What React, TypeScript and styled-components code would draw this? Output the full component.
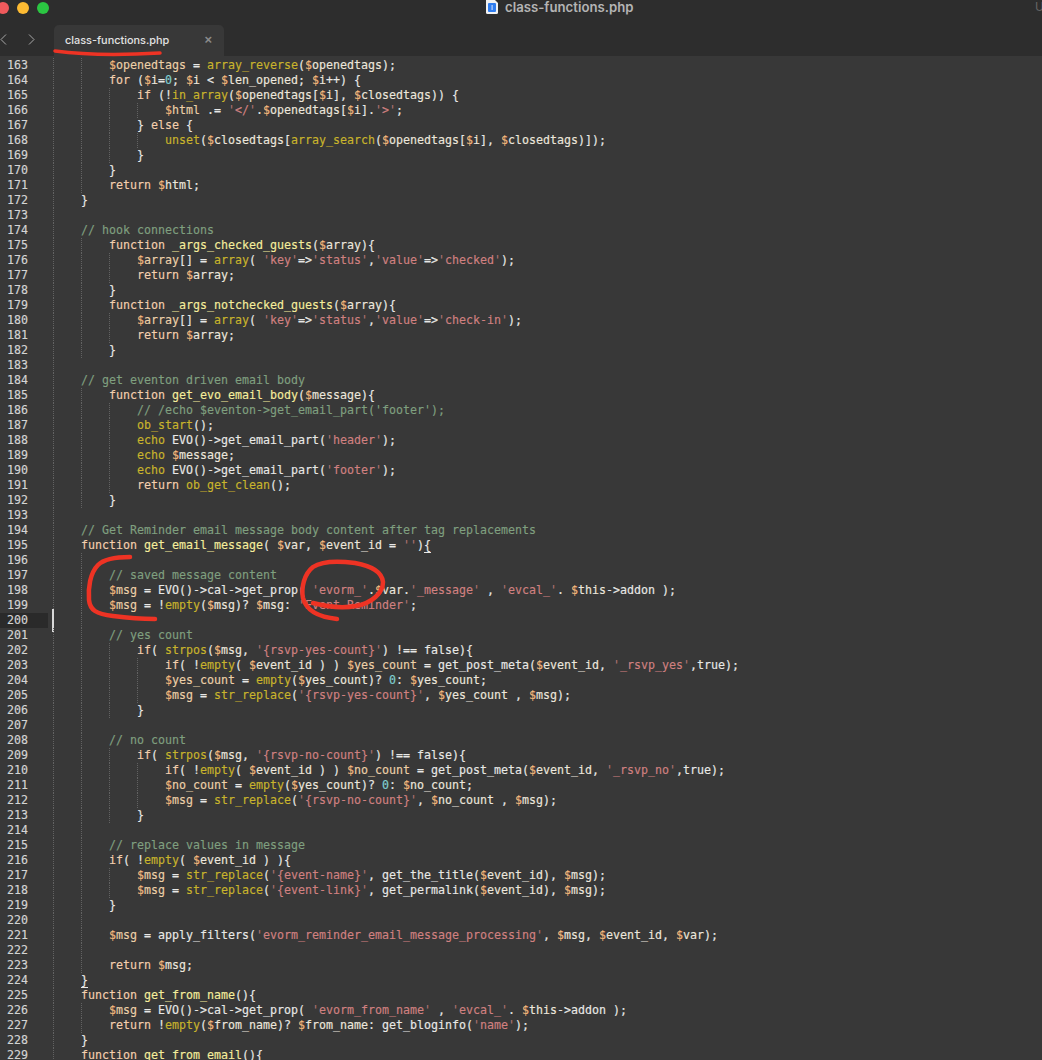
import React from 'react';
import styled, { createGlobalStyle } from 'styled-components';

type Kind = 'plain' | 'comment' | 'string' | 'quote' | 'sigil' | 'variable' | 'target' | 'keyword' | 'builtin' | 'definition' | 'number';

const COLORS: Record<Kind, string> = {
  plain: '#e8e8e6',
  comment: '#7f9f7f',
  string: '#d08080',
  quote: '#ac7272',
  sigil: '#f2b77c',
  variable: '#ece6dc',
  target: '#ecd0a8',
  keyword: '#f3cfae',
  builtin: '#c8b42c',
  definition: '#f5ed9c',
  number: '#7fcfd0',
};

const FIRST_LINE = 163;
const ACTIVE_LINE = 200;
const MATCHED_BRACES = [195, 224];

const SOURCE = `        $openedtags = array_reverse($openedtags);
        for ($i=0; $i < $len_opened; $i++) {
            if (!in_array($openedtags[$i], $closedtags)) {
                $html .= '</'.$openedtags[$i].'>';
            } else {
                unset($closedtags[array_search($openedtags[$i], $closedtags)]);
            }
        }
        return $html;
    }

    // hook connections
        function _args_checked_guests($array){
            $array[] = array( 'key'=>'status','value'=>'checked');
            return $array;
        }
        function _args_notchecked_guests($array){
            $array[] = array( 'key'=>'status','value'=>'check-in');
            return $array;
        }

    // get eventon driven email body
        function get_evo_email_body($message){
            // /echo $eventon->get_email_part('footer');
            ob_start();
            echo EVO()->get_email_part('header');
            echo $message;
            echo EVO()->get_email_part('footer');
            return ob_get_clean();
        }

    // Get Reminder email message body content after tag replacements
    function get_email_message( $var, $event_id = ''){

        // saved message content
        $msg = EVO()->cal->get_prop( 'evorm_'.$var.'_message' , 'evcal_'. $this->addon );
        $msg = !empty($msg)? $msg: 'Event Reminder';

        // yes count
            if( strpos($msg, '{rsvp-yes-count}') !== false){
                if( !empty( $event_id ) ) $yes_count = get_post_meta($event_id, '_rsvp_yes',true);
                $yes_count = empty($yes_count)? 0: $yes_count;
                $msg = str_replace('{rsvp-yes-count}', $yes_count , $msg);
            }

        // no count
            if( strpos($msg, '{rsvp-no-count}') !== false){
                if( !empty( $event_id ) ) $no_count = get_post_meta($event_id, '_rsvp_no',true);
                $no_count = empty($yes_count)? 0: $no_count;
                $msg = str_replace('{rsvp-no-count}', $no_count , $msg);
            }

        // replace values in message
        if( !empty( $event_id ) ){
            $msg = str_replace('{event-name}', get_the_title($event_id), $msg);
            $msg = str_replace('{event-link}', get_permalink($event_id), $msg);
        }

        $msg = apply_filters('evorm_reminder_email_message_processing', $msg, $event_id, $var);

        return $msg;
    }
    function get_from_name(){
        $msg = EVO()->cal->get_prop( 'evorm_from_name' , 'evcal_'. $this->addon );
        return !empty($from_name)? $from_name: get_bloginfo('name');
    }
    function get_from_email(){`;

const KEYWORDS = ['function', 'for', 'if', 'else', 'return'];
const BUILTINS = ['array_reverse', 'in_array', 'unset', 'array_search', 'array', 'ob_start', 'ob_get_clean', 'echo', 'empty', 'strpos', 'str_replace'];

const GlobalStyle = createGlobalStyle`
  html, body {
    margin: 0;
    background: #383838;
  }
`;

const Window = styled.div`
  position: relative;
  width: 1042px;
  height: 1060px;
  overflow: hidden;
  background: #383838;
`;

const TitleRow = styled.div`
  display: flex;
  align-items: flex-start;
  height: 25px;
  background: #2d2d2d;
`;

const Lights = styled.div`
  display: flex;
  gap: 8px;
  margin: 2px 0 0 -3px;
`;

const Light = styled.span<{ $color: string }>`
  width: 12px;
  height: 12px;
  border-radius: 50%;
  background: ${p => p.$color};
`;

const Title = styled.div`
  display: flex;
  align-items: flex-start;
  gap: 7px;
  margin-left: 437px;
  font: 600 13.2px/14px Inter, sans-serif;
  color: #b4b4b4;
`;

const CutOffHint = styled.div`
  margin-left: auto;
  margin-right: -1px;
  width: 8px;
  overflow: hidden;
  font: 12px/14px Inter, sans-serif;
  color: #666;
`;

const TabRow = styled.div`
  display: flex;
  align-items: stretch;
  height: 31px;
  background: #2d2d2d;
`;

const Nav = styled.div`
  display: flex;
  align-items: center;
  gap: 21px;
  width: 54px;
  padding: 0 0 3px 0;
  box-sizing: border-box;
`;

const Tab = styled.div`
  display: flex;
  align-items: center;
  justify-content: space-between;
  width: 170px;
  padding: 0 12px 0 11px;
  box-sizing: border-box;
  border-radius: 5px 5px 0 0;
  background: #383838;
  font: 500 10.9px/15px Inter, sans-serif;
  color: #e2e2e2;
`;

const Close = styled.span`
  margin-top: -2px;
  font: 700 13px/15px "Liberation Sans", sans-serif;
  color: #8a8a8a;
`;

const Editor = styled.div`
  padding-top: 2px;
  font: 11.63px/15px "DejaVu Sans Mono", monospace;
  white-space: pre;
  -webkit-text-stroke: 0.15px;
`;

const Row = styled.div`
  position: relative;
  display: flex;
  height: 15px;
`;

const LineNumber = styled.div<{ $active: boolean }>`
  flex: none;
  width: 48px;
  margin-right: 5px;
  padding-left: 7px;
  box-sizing: border-box;
  color: #d4d4d4;
  background: ${p => (p.$active ? '#2a2a2a' : 'transparent')};
`;

const Guide = styled.span`
  flex: none;
  width: 4ch;
  box-sizing: border-box;
  border-left: 1px dotted #626262;
`;

const Caret = styled.span`
  position: absolute;
  left: 52px;
  top: -4px;
  width: 2px;
  height: 23px;
  background: #d8d8d8;
`;

const Token = styled.span<{ $kind: Kind; $matched?: boolean }>`
  color: ${p => COLORS[p.$kind]};
  ${p => p.$matched && 'border-bottom: 1px solid #e8e8e6;'}
`;

const Marker = styled.svg`
  position: absolute;
  inset: 0;
  pointer-events: none;
`;

const Stroke = styled.path`
  fill: none;
  stroke: #ee3324;
  stroke-linecap: round;
  stroke-linejoin: round;
`;

const tokenize = (text: string) => {
  const out: { kind: Kind; text: string }[] = [];
  const pattern = /(\/\/.*$)|('[^']*')|(\$\w+)|(\b\d+\b)|([A-Za-z_]\w*)|([\s\S])/g;
  let prevWord = '';
  for (const m of text.matchAll(pattern)) {
    if (m[1]) out.push({ kind: 'comment', text: m[1] });
    else if (m[2]) {
      out.push({ kind: 'quote', text: "'" });
      if (m[2].length > 2) out.push({ kind: 'string', text: m[2].slice(1, -1) });
      out.push({ kind: 'quote', text: "'" });
    } else if (m[3]) {
      // assignment targets are tinted, other variables only get a coloured $
      const rest = text.slice(m.index + m[3].length);
      const isTarget = /^(\[\])? \.?= /.test(rest) && m[3] !== '$event_id';
      out.push({ kind: 'sigil', text: '$' });
      out.push({ kind: isTarget ? 'target' : 'variable', text: m[3].slice(1) });
    } else if (m[4]) out.push({ kind: 'number', text: m[4] });
    else if (m[5]) {
      let kind: Kind = 'plain';
      if (prevWord === 'function') kind = 'definition';
      else if (KEYWORDS.includes(m[5])) kind = 'keyword';
      else if (BUILTINS.includes(m[5])) kind = 'builtin';
      out.push({ kind, text: m[5] });
      prevWord = m[5];
    } else out.push({ kind: 'plain', text: m[6] });
  }
  return out;
};

const indentOf = (line: string) => line.length - line.trimStart().length;

const lines = SOURCE.split('\n');

// blank lines take their guides from the next line that has code
const guidesFor = (index: number) => {
  let i = index;
  while (i < lines.length - 1 && lines[i].trim() === '') i++;
  return Math.floor(indentOf(lines[i]) / 4);
};

const CodeLine: React.FC<{ text: string; index: number }> = ({ text, index }) => {
  const number = FIRST_LINE + index;
  const tokens = tokenize(text.trimStart());
  return (
    <Row>
      <LineNumber $active={number === ACTIVE_LINE}>{number}</LineNumber>
      {Array.from({ length: guidesFor(index) }, (_, i) => (
        <Guide key={i} />
      ))}
      <span>
        {tokens.map((t, i) => (
          <Token key={i} $kind={t.kind} $matched={MATCHED_BRACES.includes(number) && i === tokens.length - 1}>
            {t.text}
          </Token>
        ))}
      </span>
      {number === ACTIVE_LINE && <Caret />}
    </Row>
  );
};

const Chevron: React.FC<{ d: string }> = ({ d }) => (
  <svg width="7" height="11" viewBox="0 0 7 11">
    <path d={d} fill="none" stroke="#a8a8a8" strokeWidth="1" />
  </svg>
);

const FileIcon = () => (
  <svg width="12" height="14" viewBox="0 0 12 14">
    <path d="M0 0H9L12 3V12.5Q12 14 10.500 14H1.500Q0 14 0 12.500Z" fill="#f2f2f2" />
    <rect x="2" y="3" width="8" height="9" rx="1" fill="#2f7df0" />
    <rect x="5.500" y="5" width="1.200" height="5" fill="#bcd6ff" />
  </svg>
);

const App: React.FC = () => (
  <Window>
    <GlobalStyle />
    <TitleRow>
      <Lights>
        <Light $color="#ef5a5c" />
        <Light $color="#fdbb33" />
        <Light $color="#2bc642" />
      </Lights>
      <Title>
        <FileIcon />
        class-functions.php
      </Title>
      <CutOffHint>U</CutOffHint>
    </TitleRow>
    <TabRow>
      <Nav>
        <Chevron d="M6 0.500 L1 5.500 L6 10.500" />
        <Chevron d="M1 0.500 L6 5.500 L1 10.500" />
      </Nav>
      <Tab>
        class-functions.php
        <Close>×</Close>
      </Tab>
    </TabRow>
    <Editor>
      {lines.map((text, i) => (
        <CodeLine key={i} text={text} index={i} />
      ))}
    </Editor>
    <Marker width="1042" height="1060" viewBox="0 0 1042 1060">
      <Stroke strokeWidth="3.5" d="M55 51 C85 55 125 55 160 53" />
      <Stroke strokeWidth="4.5" d="M130 557 C115 557 104 559 98 565 C90 573 88 588 89 600 C90 610 96 614 113 616 C128 618 142 619 155 619" />
      <Stroke strokeWidth="4.5" d="M313 603 C328 607 345 608 356 606 C372 603 383 593 383 582 C382 572 372 566 355 563 C340 561 322 561 313 567 C304 574 301 588 303 598 C306 610 318 617 337 619" />
    </Marker>
  </Window>
);

export default App;
